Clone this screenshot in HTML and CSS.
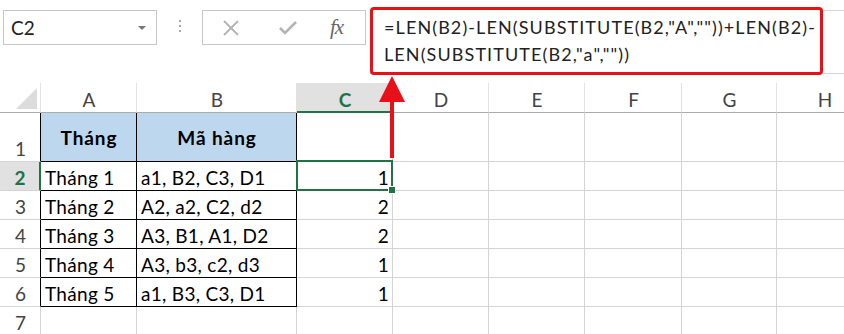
FILE: index.html
```html
<!DOCTYPE html>
<html lang="vi">
<head>
    <meta charset="UTF-8">
    <title>Excel - LEN SUBSTITUTE</title>
    <link rel="stylesheet" href="styles.css">
</head>
<body>

    <!-- Thanh công thức -->
    <div class="formula-bar">
        <div class="name-box">
            <span>C2</span>
            <span class="caret"></span>
        </div>
        <div class="grip"><i></i><i></i><i></i></div>
        <div class="fx-buttons">
            <svg class="icon" width="18" height="18" viewBox="0 0 18 18">
                <path d="M2 2 L16 16 M16 2 L2 16" stroke="#b4b4b4" stroke-width="1.8" fill="none"/>
            </svg>
            <svg class="icon ok" width="20" height="18" viewBox="0 0 20 18">
                <path d="M2 9 L7 14 L18 3" stroke="#b4b4b4" stroke-width="2.6" fill="none"/>
            </svg>
            <span class="fx">fx</span>
        </div>
        <div class="formula-wrap">
            <div class="formula">=LEN(B2)-LEN(SUBSTITUTE(B2,"A",""))+LEN(B2)-<br>LEN(SUBSTITUTE(B2,"a",""))</div>
        </div>
    </div>

    <!-- Bảng tính -->
    <div class="sheet">
        <div class="cell head corner"></div>
        <div class="cell head">A</div>
        <div class="cell head">B</div>
        <div class="cell head active">C</div>
        <div class="cell head">D</div>
        <div class="cell head">E</div>
        <div class="cell head">F</div>
        <div class="cell head">G</div>
        <div class="cell head">H</div>

        <div class="cell rowhead first edge">1</div>
        <div class="cell title box">Tháng</div>
        <div class="cell title box">Mã hàng</div>
        <div class="cell"></div><div class="cell"></div><div class="cell"></div><div class="cell"></div><div class="cell"></div><div class="cell"></div>

        <div class="cell rowhead active-row">2</div>
        <div class="cell box">Tháng 1</div>
        <div class="cell box">a1, B2, C3, D1</div>
        <div class="cell num selected">1<span class="handle"></span></div>
        <div class="cell"></div><div class="cell"></div><div class="cell"></div><div class="cell"></div><div class="cell"></div>

        <div class="cell rowhead edge">3</div>
        <div class="cell box">Tháng 2</div>
        <div class="cell box">A2, a2, C2, d2</div>
        <div class="cell num">2</div>
        <div class="cell"></div><div class="cell"></div><div class="cell"></div><div class="cell"></div><div class="cell"></div>

        <div class="cell rowhead edge">4</div>
        <div class="cell box">Tháng 3</div>
        <div class="cell box">A3, B1, A1, D2</div>
        <div class="cell num">2</div>
        <div class="cell"></div><div class="cell"></div><div class="cell"></div><div class="cell"></div><div class="cell"></div>

        <div class="cell rowhead edge">5</div>
        <div class="cell box">Tháng 4</div>
        <div class="cell box">A3, b3, c2, d3</div>
        <div class="cell num">1</div>
        <div class="cell"></div><div class="cell"></div><div class="cell"></div><div class="cell"></div><div class="cell"></div>

        <div class="cell rowhead edge">6</div>
        <div class="cell box">Tháng 5</div>
        <div class="cell box">a1, B3, C3, D1</div>
        <div class="cell num">1</div>
        <div class="cell"></div><div class="cell"></div><div class="cell"></div><div class="cell"></div><div class="cell"></div>

        <div class="cell rowhead">7</div>
        <div class="cell"></div><div class="cell"></div><div class="cell"></div><div class="cell"></div><div class="cell"></div><div class="cell"></div><div class="cell"></div><div class="cell"></div>
    </div>

    <!-- Mũi tên chỉ lên công thức -->
    <svg class="arrow" width="30" height="86" viewBox="0 0 30 86">
        <rect x="13" y="22" width="4" height="60" fill="#e8111a"/>
        <polygon points="2,26 15,0 28,26" fill="#e8111a"/>
    </svg>

</body>
</html>
```

FILE: styles.css
```css
body {
    margin: 0;
    width: 844px;
    height: 334px;
    overflow: hidden;
    background: #ffffff;
    font-family: 'Lato', 'Liberation Sans', sans-serif;
    position: relative;
}

/* Thanh công thức */
.formula-bar {
    display: flex;
    align-items: flex-start;
    height: 83px;
}

.name-box {
    margin: 10px 0 0 3px;
    width: 154px;
    height: 35px;
    box-sizing: border-box;
    border: 1px solid #c6c6c6;
    display: flex;
    align-items: center;
    justify-content: space-between;
    padding: 0 10px 0 7px;
    font-size: 19px;
    color: #222;
}

.caret {
    width: 0;
    height: 0;
    border-left: 4px solid transparent;
    border-right: 4px solid transparent;
    border-top: 4px solid #777;
}

.grip {
    width: 45px;
    margin-top: 20px;
    display: flex;
    flex-direction: column;
    align-items: center;
    gap: 3px;
}

.grip i {
    width: 2px;
    height: 2px;
    background: #a8a8a8;
}

.fx-buttons {
    margin-top: 10px;
    width: 164px;
    height: 35px;
    box-sizing: border-box;
    border: 1px solid #c6c6c6;
    display: flex;
    align-items: center;
    padding-left: 19px;
}

.fx-buttons .ok {
    margin-left: 38px;
}

.fx {
    margin-left: 32px;
    font-family: 'Liberation Serif', serif;
    font-style: italic;
    font-size: 21px;
    color: #666;
    letter-spacing: -1px;
}

.formula-wrap {
    flex: 1;
    margin: 10px 0 0 4px;
    height: 64px;
    box-sizing: border-box;
    border-top: 1px solid #d4d4d4;
    border-bottom: 1px solid #d4d4d4;
}

.formula {
    margin-top: -4px;
    width: 453px;
    height: 68px;
    box-sizing: border-box;
    border: 3px solid #e8111a;
    border-radius: 4px;
    background: #fff;
    padding: 4px 0 0 11px;
    font-size: 18px;
    line-height: 27px;
    letter-spacing: 1.1px;
    color: #222;
    white-space: nowrap;
}

/* Bảng tính */
.sheet {
    display: grid;
    grid-template-columns: 41px 96px 160px 96px 96px 96px 97px 95px 96px;
    grid-template-rows: 30px 49px repeat(6, 29px);
}

.cell {
    box-sizing: border-box;
    border-right: 1px solid #d4d4d4;
    border-bottom: 1px solid #d4d4d4;
    font-size: 19px;
    letter-spacing: 0.3px;
    color: #000;
    display: flex;
    align-items: center;
    padding: 2px 3px 0 4px;
    white-space: nowrap;
    position: relative;
}

.head {
    justify-content: center;
    color: #444;
    letter-spacing: 0;
    border-right-color: #e2e2e2;
    border-bottom-color: #ababab;
    padding-top: 4px;
}

.corner::after {
    content: "";
    position: absolute;
    right: 3px;
    bottom: 3px;
    border-left: 21px solid transparent;
    border-bottom: 21px solid #dcdcdc;
}

.head.active {
    background: #e1e1e1;
    color: #217346;
    font-weight: bold;
    border-bottom: 2px solid #217346;
}

.rowhead {
    justify-content: center;
    color: #444;
    letter-spacing: 0;
}

.rowhead.first {
    align-items: flex-end;
    padding-bottom: 1px;
}

.rowhead.edge {
    border-right-color: #000;
}

.rowhead.active-row {
    background: #e1e1e1;
    color: #217346;
    font-weight: bold;
    border-right: 2px solid #217346;
}

.box {
    border-right-color: #000;
    border-bottom-color: #000;
}

.title {
    background: #bdd7ee;
    font-weight: bold;
    letter-spacing: 0.9px;
    justify-content: center;
    padding-top: 0;
}

.num {
    justify-content: flex-end;
}

.selected::after {
    content: "";
    position: absolute;
    left: -1px;
    top: -2px;
    right: -1px;
    bottom: -1px;
    border: 2px solid #217346;
}

.handle {
    position: absolute;
    right: -4px;
    bottom: -4px;
    width: 6px;
    height: 6px;
    background: #217346;
    border: 1px solid #fff;
    z-index: 2;
}

.arrow {
    position: absolute;
    left: 377px;
    top: 76px;
}
```
